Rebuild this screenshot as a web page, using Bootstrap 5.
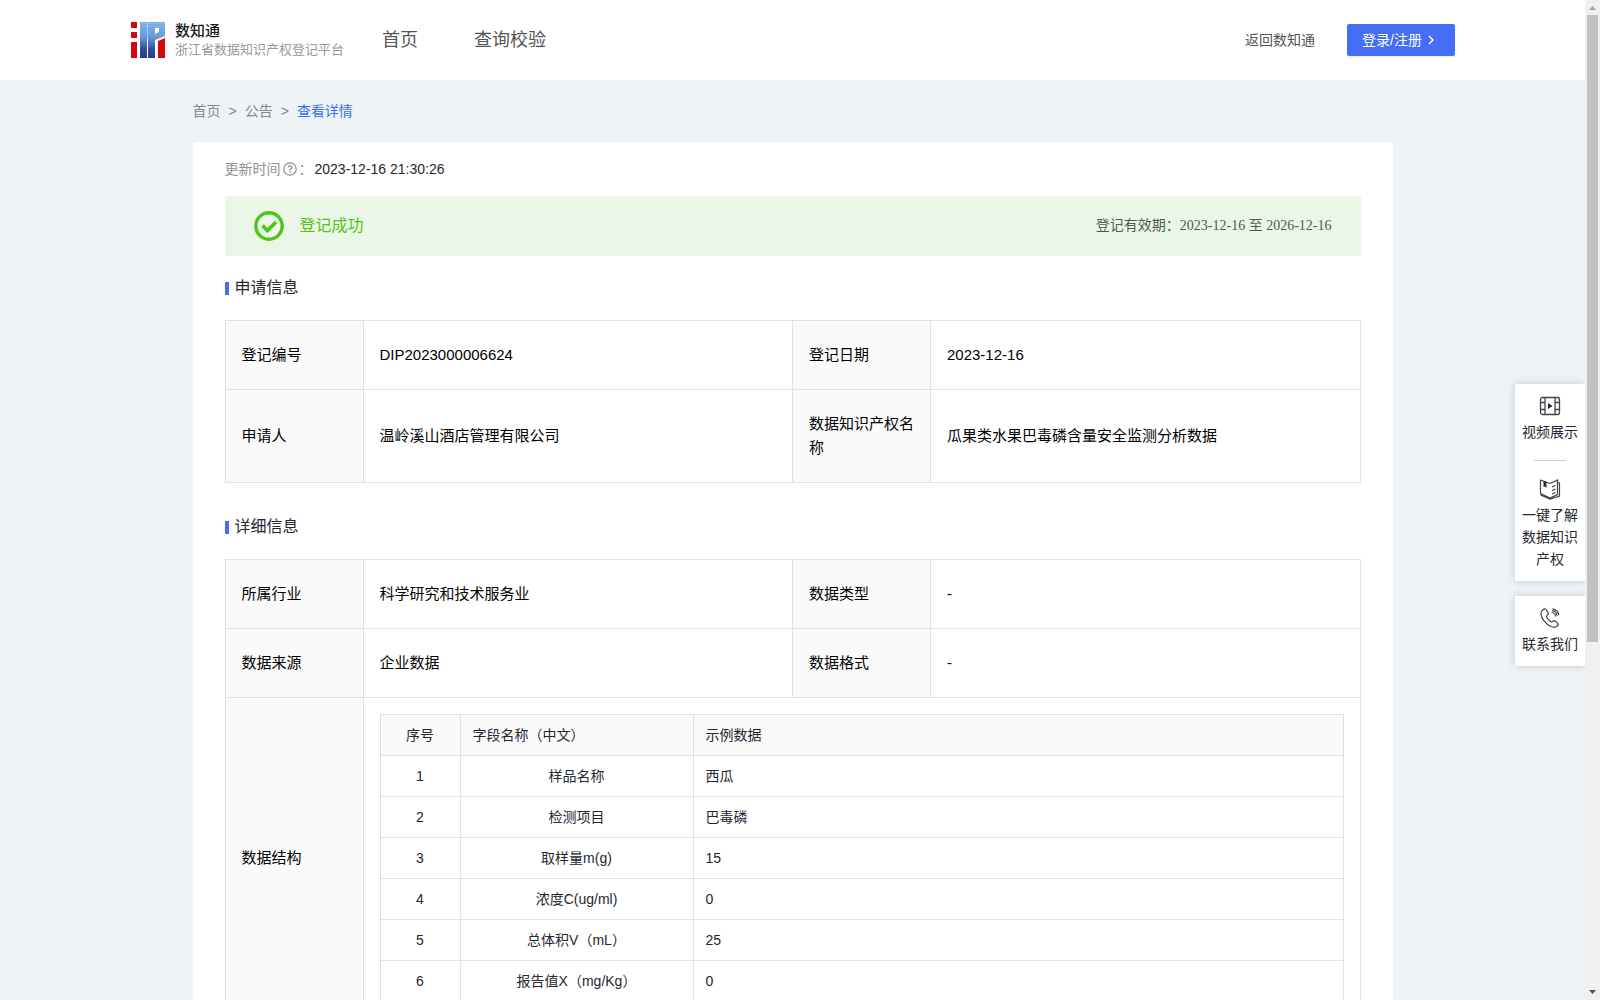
<!DOCTYPE html>
<html lang="zh-CN">
<head>
<meta charset="utf-8">
<meta name="viewport" content="width=device-width, initial-scale=1">
<title>数知通 - 查看详情</title>
<link rel="stylesheet" href="https://cdn.jsdelivr.net/npm/bootstrap@5.3.0/dist/css/bootstrap.min.css">
<style>
  body { font-family: "Liberation Sans", "Noto Sans CJK SC", sans-serif; font-size: 14px; line-height: 22px; color: #262631; background: #eef3f6; }
  a { text-decoration: none; }
  .viewport { overflow: hidden; }
  .site-header { height: 80px; padding: 0 130px; background: #fff; }
  .brand { gap: 10px; color: #1a1a1a; }
  .brand-name { font-size: 15px; line-height: 20px; font-weight: 500; }
  .brand-sub { font-size: 13px; line-height: 18px; color: #999; }
  .main-nav { gap: 56px; margin-left: 38px; font-size: 18px; }
  .main-nav a, .back-link { color: #555; }
  .btn-login { --bs-btn-color: #fff; --bs-btn-bg: #436ef5; --bs-btn-border-color: #436ef5; --bs-btn-hover-color: #fff; --bs-btn-hover-bg: #3560e8; height: 32px; width: 108px; padding: 0 14px; font-size: 14px; border-radius: 2px; box-shadow: 0 2px 0 rgba(0,0,0,.045); }
  .page-width { max-width: 1200px; }
  .crumbs { padding: 20px 0; }
  .crumbs .breadcrumb { --bs-breadcrumb-divider: '>'; --bs-breadcrumb-divider-color: #888; --bs-breadcrumb-item-active-color: #3d6cf5; --bs-breadcrumb-item-padding-x: 8px; }
  .crumbs a { color: #888; }
  .panel { background: #fff; border-radius: 4px; padding: 16px 32px 40px; }
  .muted { color: #919198; }
  .updated { gap: 2px; }
  .status { height: 60px; padding: 0 29px; margin-top: 16px; background: #ebf7e6; }
  .status-title { font-size: 16px; color: #52c41a; }
  .status-term { font-family: "Liberation Serif", "Noto Sans CJK SC", serif; color: #555; }
  .section-title { font-size: 16px; line-height: 24px; margin: 20px 0; gap: 6px; font-weight: 400; }
  .section-title::before { content: ""; width: 4px; height: 13px; background: #436ef5; }
  .later { margin-top: 32px; }
  .info, .fields { table-layout: fixed; margin: 0; border-color: #e1e1e1; }
  .info { font-size: 15px; line-height: 24px; }
  .info > tbody > tr > * { padding: 22px 16px; font-weight: 400; vertical-align: middle; color: #000; }
  .info > tbody > tr > th { background: #fafafa; }
  .info > tbody > tr > .nested { padding: 16px; }
  .w-label { width: 138px; }
  .fields { font-size: 14px; line-height: 22px; }
  .fields > * > tr > * { padding: 9px 12px; font-weight: 400; color: #262631; }
  .fields > thead th { background: #fafafa; }
  .fields tbody td:nth-child(-n+2) { text-align: center; }
  .w-index { width: 80px; }
  .w-name { width: 233px; }
  .side-tools { top: 384px; right: 0; width: 70px; gap: 15px; }
  .tool-card { background: #fff; box-shadow: 0 0 8px rgba(0,0,0,.18); padding: 11px 6px; }
  .tool-card a { color: #262631; gap: 4px; }
  .tool-card hr { width: 32px; margin: 17px auto; border-color: #cfcfcf; opacity: 1; }
  .scroll-rail { width: 15px; background: #f0f0f0; padding: 6px 0; }
  .scroll-thumb { width: 11px; height: 627px; margin-top: 5px; background: #c1c1c1; }
</style>
<script src="https://cdn.jsdelivr.net/npm/bootstrap@5.3.0/dist/js/bootstrap.bundle.min.js"></script>
</head>
<body>
<div class="d-flex vh-100">
  <div class="viewport flex-fill position-relative">
    <header class="site-header d-flex align-items-center">
      <a href="#" class="brand d-flex align-items-center">
        <svg width="35" height="36" viewBox="0 0 35 36" aria-hidden="true">
          <defs><linearGradient id="blue" gradientUnits="userSpaceOnUse" x1="0" y1="0" x2="0" y2="36"><stop offset="0" stop-color="#79b0e6"/><stop offset=".4" stop-color="#6c9bdc"/><stop offset=".75" stop-color="#30509c"/><stop offset="1" stop-color="#253985"/></linearGradient></defs>
          <path fill="#d2080c" d="M1 0h6v6H1zM1 10h6v6H1zM1 20h6v16H1zM28 19l7-3v20h-7z"/>
          <path fill="#a9cbee" d="M17 0h1v17h-1z"/>
          <path fill="url(#blue)" d="M9 0h8v36h-7V0z"/>
          <path fill="url(#blue)" fill-rule="evenodd" d="M18 0h17v14l-10 4v18h-7V0zM25 6v6l4-2V6z"/>
          <path stroke="#fff" stroke-opacity=".15" d="M10 1.500h25M10 4.500h25"/>
        </svg>
        <span class="d-flex flex-column"><span class="brand-name">数知通</span><span class="brand-sub">浙江省数据知识产权登记平台</span></span>
      </a>
      <nav class="main-nav d-flex"><a href="#">首页</a><a href="#">查询校验</a></nav>
      <div class="d-flex align-items-center ms-auto gap-4">
        <a href="#" class="back-link me-2">返回数知通</a>
        <button type="button" class="btn btn-login d-flex align-items-center gap-1">登录/注册
          <svg width="10" height="12" viewBox="0 0 10 12" fill="none" stroke="#fff" stroke-width="1.500" aria-hidden="true"><path d="M3 2l4 4-4 4"/></svg>
        </button>
      </div>
    </header>

    <main class="page-width mx-auto">
      <nav class="crumbs" aria-label="breadcrumb">
        <ol class="breadcrumb m-0">
          <li class="breadcrumb-item"><a href="#">首页</a></li>
          <li class="breadcrumb-item"><a href="#">公告</a></li>
          <li class="breadcrumb-item active" aria-current="page">查看详情</li>
        </ol>
      </nav>

      <div class="panel">
        <div class="updated d-flex align-items-center">
          <span class="muted">更新时间</span>
          <svg width="14" height="14" viewBox="0 0 14 14" fill="none" stroke="#919198" stroke-width="1.300" aria-hidden="true"><circle cx="7" cy="7" r="6.200"/><path d="M5.200 5.600c0-2.500 3.700-2.400 3.700-.2C8.900 6.800 7 6.900 7 8.400M7 9.400v1.300"/></svg>
          <span class="muted">：</span>
          <span>2023-12-16 21:30:26</span>
        </div>
        <div class="status d-flex align-items-center justify-content-between">
          <div class="d-flex align-items-center gap-3">
            <svg width="30" height="30" viewBox="0 0 30 30" fill="none" stroke="#4fc51b" aria-hidden="true"><circle cx="15" cy="15" r="13.200" stroke-width="3.400"/><path d="M8.500 14.500l5 5 8.500-8.500" stroke-width="3.800"/></svg>
            <span class="status-title">登记成功</span>
          </div>
          <span class="status-term">登记有效期：2023-12-16 至 2026-12-16</span>
        </div>

        <h2 class="section-title d-flex align-items-center">申请信息</h2>
        <table class="table table-bordered info">
          <colgroup><col class="w-label"><col><col class="w-label"><col></colgroup>
          <tbody>
            <tr><th scope="row">登记编号</th><td>DIP2023000006624</td><th scope="row">登记日期</th><td>2023-12-16</td></tr>
            <tr><th scope="row">申请人</th><td>温岭溪山酒店管理有限公司</td><th scope="row">数据知识产权名称</th><td>瓜果类水果巴毒磷含量安全监测分析数据</td></tr>
          </tbody>
        </table>

        <h2 class="section-title later d-flex align-items-center">详细信息</h2>
        <table class="table table-bordered info">
          <colgroup><col class="w-label"><col><col class="w-label"><col></colgroup>
          <tbody>
            <tr><th scope="row">所属行业</th><td>科学研究和技术服务业</td><th scope="row">数据类型</th><td>-</td></tr>
            <tr><th scope="row">数据来源</th><td>企业数据</td><th scope="row">数据格式</th><td>-</td></tr>
            <tr><th scope="row">数据结构</th>
              <td colspan="3" class="nested">
                <table class="table table-bordered fields">
                  <colgroup><col class="w-index"><col class="w-name"><col></colgroup>
                  <thead><tr><th scope="col" class="text-center">序号</th><th scope="col">字段名称（中文）</th><th scope="col">示例数据</th></tr></thead>
                  <tbody>
                    <tr><td>1</td><td>样品名称</td><td>西瓜</td></tr>
                    <tr><td>2</td><td>检测项目</td><td>巴毒磷</td></tr>
                    <tr><td>3</td><td>取样量m(g)</td><td>15</td></tr>
                    <tr><td>4</td><td>浓度C(ug/ml)</td><td>0</td></tr>
                    <tr><td>5</td><td>总体积V（mL）</td><td>25</td></tr>
                    <tr><td>6</td><td>报告值X（mg/Kg）</td><td>0</td></tr>
                  </tbody>
                </table>
              </td></tr>
          </tbody>
        </table>
      </div>
    </main>

    <aside class="side-tools position-absolute d-flex flex-column">
      <div class="tool-card">
        <a href="#" class="d-flex flex-column align-items-center text-center">
          <svg width="22" height="22" viewBox="0 0 22 22" fill="none" stroke="#42424c" stroke-width="1.300" aria-hidden="true"><rect x="1.500" y="2.500" width="19" height="17" rx="2"/><path d="M6 2.500v17M16 2.500v17M1.500 7.500H6M1.500 14.500H6M16 7.500h4.500M16 14.500h4.500"/><path d="M9 8l4.500 3L9 14z" fill="#262631" stroke="none"/></svg>
          <span>视频展示</span>
        </a>
        <hr>
        <a href="#" class="d-flex flex-column align-items-center text-center">
          <svg width="22" height="22" viewBox="0 0 22 22" fill="none" stroke="#42424c" stroke-width="1.200" aria-hidden="true"><path d="M11 5.500L1.500 2v13.500L11 20l7.500-3.500V2L11 5.500M18.500 4.500l2 .5v13L11 21l-9.500-4"/><path d="M13 9l3.500-1.500M13 12.500l3.500-1.500M13 16l3.500-1.500"/><path d="M4.500 3l3 1v6L6 8.500l-1.500.5z" fill="#262631" stroke="none"/></svg>
          <span>一键了解数据知识产权</span>
        </a>
      </div>
      <div class="tool-card">
        <a href="#" class="d-flex flex-column align-items-center text-center">
          <svg width="22" height="22" viewBox="0 0 22 22" fill="none" stroke="#42424c" stroke-width="1.200" aria-hidden="true"><path d="M4 2.500C1 4.500 1.200 9 5 13.800c4 5 9 7.400 12 5.900 1.500-.8 2.500-2 2-3l-3-3c-1-.7-2.500 1-3.500 1.200C11 14.500 7.500 11 7.500 9.500c0-1 2-1.800 1.800-3L7.500 3C6.700 1.500 5 1.800 4 2.500z"/><path d="M12.500 5.500c2.300.3 3.800 1.800 4 4M13.500 1.800c3.500.5 6 3 6.200 6.500M13 3.700c2.700.3 4.700 2.200 5 5"/></svg>
          <span>联系我们</span>
        </a>
      </div>
    </aside>
  </div>

  <div class="scroll-rail flex-shrink-0 d-flex flex-column align-items-center" aria-hidden="true">
    <svg width="7" height="4" viewBox="0 0 7 4"><path d="M0 4l3.500-4L7 4z" fill="#a3a3a3"/></svg>
    <div class="scroll-thumb"></div>
    <svg class="mt-auto" width="7" height="4" viewBox="0 0 7 4"><path d="M0 0l3.500 4L7 0z" fill="#505050"/></svg>
  </div>
</div>
</body>
</html>
